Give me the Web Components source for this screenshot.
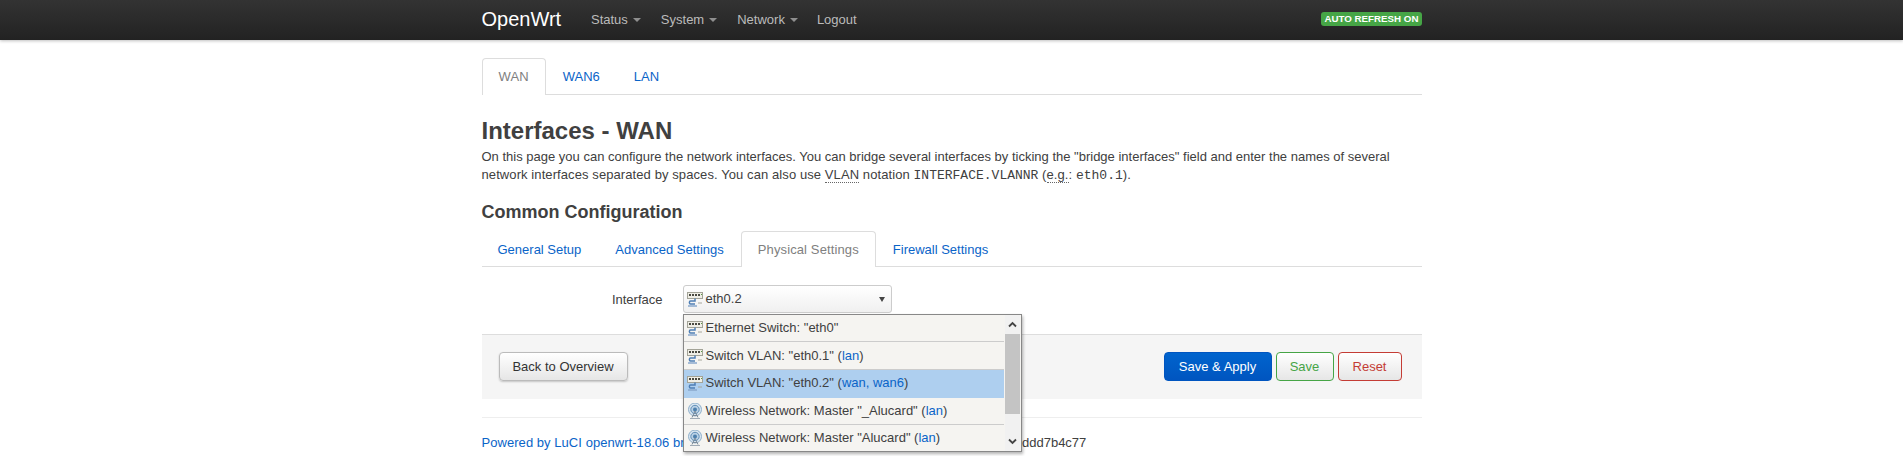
<!DOCTYPE html>
<html lang="en"><head><meta charset="utf-8"><title>Interfaces - WAN</title>
<style>
html,body{margin:0;padding:0;background:#fff;height:456px;overflow:hidden}
body{font:13px/18px "Liberation Sans",Arial,sans-serif;color:#404040}
</style></head><body>
<luci-navbar></luci-navbar>
<luci-page>
  <luci-tabs slot="top" active="WAN" items="WAN|WAN6|LAN" pad="17" style="--mt:18px;--h:36px"></luci-tabs>
  <luci-intro></luci-intro>
  <luci-tabs active="Physical Settings" items="General Setup|Advanced Settings|Physical Settings|Firewall Settings" pad="17" style="--mt:0;--h:35px"></luci-tabs>
  <luci-field></luci-field>
  <luci-actions></luci-actions>
  <luci-footer></luci-footer>
</luci-page>
<script>
const SWITCH=`<svg width="16" height="16" viewBox="0 0 16 16" aria-hidden="true"><rect x=".5" y="1.5" width="15" height="6" fill="#efeee6" stroke="#a3a397"/><path d="M2 3h2v2H2zM5 3h2v2H5zM8 3h2v2H8zM11 3h2v2h-2z" fill="#4a4a42"/><path d="M14 3h1v1h-1z" fill="#5a9b43"/><path d="M8 7.5V10H3.5c-1.5 0-1.5 3 0 3H8" fill="none" stroke="#4f7fb5" stroke-width="1.5"/><path d="M1 15h9" stroke="#8aa8cc" stroke-width="1.5"/><path d="M11 12h4" stroke="#a8a89e"/></svg>`;
const WIFI=`<svg width="16" height="16" viewBox="0 0 16 16" aria-hidden="true"><circle cx="8" cy="6.5" r="6.5" fill="#dbe7f1" stroke="#8fb0cc"/><circle cx="8" cy="6.5" r="4.2" fill="#b9d0e4" stroke="#5f8fb8"/><circle cx="8" cy="6.5" r="2" fill="#4d80ad"/><path d="M8 8 5 14.5M8 8l3 6.5M6 12.5h4" fill="none" stroke="#7c8c9a"/><path d="M3 15.5h10" stroke="#a0abb5"/></svg>`;
function def(name,html,init){customElements.define(name,class extends HTMLElement{constructor(){super();this.attachShadow({mode:"open"}).innerHTML=html;}connectedCallback(){if(init)init(this,this.shadowRoot);}});}

def("luci-navbar",`<style>
:host{display:block;height:40px;background:linear-gradient(#333,#222);box-shadow:0 1px 3px rgba(0,0,0,.25);color:#bbb;position:relative}
.in{width:940px;margin:0 auto;height:40px;display:flex;align-items:center}
.brand{font-size:20px;color:#fff;width:99.5px;margin-top:-2px}
a{color:#bbb;display:flex;align-items:center;font-size:13px;padding:0 10px;margin-top:-1px}
a:nth-of-type(3){padding-right:9px}
i{display:inline-block;width:0;height:0;border:4px solid transparent;border-top-color:#8f8f8f;border-bottom:0;margin-left:5px;margin-top:1px}
.badge{margin-left:auto;background:#46a546;color:#fff;font:bold 9.75px/14px "Liberation Sans",Arial,sans-serif;padding:0 3px;border-radius:3px;height:14px;margin-top:-2px}
</style><div class="in"><span class="brand">OpenWrt</span><a>Status<i></i></a><a>System<i></i></a><a>Network<i></i></a><a>Logout</a><span class="badge">AUTO REFRESH ON</span></div>`);

def("luci-page",`<style>:host{display:block;width:940px;margin:0 auto}</style><slot name="top"></slot><slot></slot>`);

def("luci-tabs",`<style>
:host{display:flex;margin-top:var(--mt,0);height:var(--h);border-bottom:1px solid #ddd}
a{display:flex;align-items:center;color:#0a64c8;box-sizing:border-box;height:calc(var(--h) + 1px);border:1px solid transparent;border-bottom:0;border-radius:4px 4px 0 0}
a:first-child:not(.on){margin-left:-1px}
a.on{color:#808080;background:#fff;border-color:#ddd;letter-spacing:.12px}
</style><span id="r" style="display:contents"></span>`,(el,s)=>{
  const p=+el.getAttribute("pad"),act=el.getAttribute("active");
  s.getElementById("r").innerHTML=el.getAttribute("items").split("|").map(t=>`<a class="${t===act?"on":""}" style="padding:0 ${p-1}px">${t}</a>`).join("");
});

def("luci-intro",`<style>
:host{display:block}
h2{font-size:24px;line-height:35px;margin:18px 0 0;color:#404040;font-weight:bold}
.l{display:block;line-height:18px}
.l2{letter-spacing:.09px}
abbr{border-bottom:1px dotted #666}
code{font:13px "Liberation Mono","Courier New",monospace;letter-spacing:0}
h3{font-size:18px;line-height:27px;margin:15px 0 5px;color:#404040;font-weight:bold}
</style><h2>Interfaces - WAN</h2><div><span class="l">On this page you can configure the network interfaces. You can bridge several interfaces by ticking the "bridge interfaces" field and enter the names of several</span><span class="l l2">network interfaces separated by spaces. You can also use <abbr>VLAN</abbr> notation <code>INTERFACE.VLANNR</code> (<abbr>e.g.</abbr>: <code>eth0.1</code>).</span></div><h3>Common Configuration</h3>`);

def("luci-field",`<style>
:host{display:flex;align-items:flex-start;margin-top:18px;height:49px;position:relative;color:#404040}
label{width:181px;line-height:30px;text-align:right}
.sel{margin-left:20px;width:209px;height:28px;box-sizing:border-box;border:1px solid #ccc;border-radius:3px;background:linear-gradient(#fff,#f0f0f0);display:flex;align-items:center;padding-left:3px;position:relative;gap:3px}
.sel svg,.row svg{flex:none}
.sel b{position:absolute;right:6px;top:11px;width:0;height:0;border:3px solid transparent;border-top:5px solid #444;border-bottom:0}
.drop{position:absolute;z-index:5;left:201px;top:29px;width:339px;height:138px;box-sizing:border-box;border:1px solid #888;background:#f5f4f1;box-shadow:1px 2px 3px rgba(0,0,0,.3);overflow:hidden}
.list{position:absolute;left:0;top:0;right:17px}
.row{display:flex;align-items:center;height:27px;gap:3px;padding-left:3px;border-bottom:1px solid #ccc;white-space:pre}
.row:first-child,.row:nth-child(4){height:26px}
.row.s{background:#aecfef;border-bottom-color:#aecfef;height:26px;padding-bottom:1px}
.row:last-child{border-bottom:0;height:26px}
.row span{color:#0a64c8}
.sb{position:absolute;right:1px;top:0;bottom:0;width:15px;background:#f1f1f1}
.th{position:absolute;left:0;right:0;top:19px;height:80px;background:#c4c4c4}
.sb svg{position:absolute;left:3px}
</style><label>Interface</label><div class="sel">${SWITCH}<span>eth0.2</span><b></b></div>
<div class="drop"><div class="list">
<div class="row">${SWITCH}<div>Ethernet Switch: "eth0"</div></div>
<div class="row">${SWITCH}<div>Switch VLAN: "eth0.1" (<span>lan</span>)</div></div>
<div class="row s">${SWITCH}<div>Switch VLAN: "eth0.2" (<span>wan, wan6</span>)</div></div>
<div class="row">${WIFI}<div>Wireless Network: Master "_Alucard" (<span>lan</span>)</div></div>
<div class="row">${WIFI}<div>Wireless Network: Master "Alucard" (<span>lan</span>)</div></div>
</div><div class="sb"><svg style="top:6px" width="9" height="7" viewBox="0 0 9 7"><path d="M1 5.5 4.5 2 8 5.5" fill="none" stroke="#444" stroke-width="1.8"/></svg><div class="th"></div><svg style="bottom:6px" width="9" height="7" viewBox="0 0 9 7"><path d="M1 1.5 4.5 5 8 1.5" fill="none" stroke="#444" stroke-width="1.8"/></svg></div></div>`);

def("luci-actions",`<style>
:host{display:flex;align-items:center;box-sizing:border-box;height:65px;background:#f5f5f5;border-top:1px solid #ddd;padding:0 20px 1px 17px;gap:4px}
button{font:13px "Liberation Sans",Arial,sans-serif;height:29px;box-sizing:border-box;border-radius:4px;padding:0;white-space:nowrap;background:linear-gradient(#fff,#e6e6e6);color:#333;border:1px solid #ccc}
.b{margin-right:auto;width:129px;box-shadow:0 1px 2px rgba(0,0,0,.2);border-color:#bbb}
.p{background:linear-gradient(#0064cd,#0055c0);color:#fff;border-color:#0055c0;width:108px}
.g{color:#46a546;border-color:#46a546;width:58px}
.r{color:#c43c35;border-color:#c43c35;width:64px}
</style><button class="b">Back to Overview</button><button class="p">Save &amp; Apply</button><button class="g">Save</button><button class="r">Reset</button>`);

def("luci-footer",`<style>
:host{display:block;margin-top:18px;border-top:1px solid #eee;padding-top:16px;white-space:nowrap}
a{color:#0a64c8;letter-spacing:.05px}
</style><a>Powered by LuCI openwrt-18.06 branch (git-19.020.41695-23a1e)</a> / OpenWrt 18.06.2 r7676-cddd7b4c77`);
</script>
</body></html>
